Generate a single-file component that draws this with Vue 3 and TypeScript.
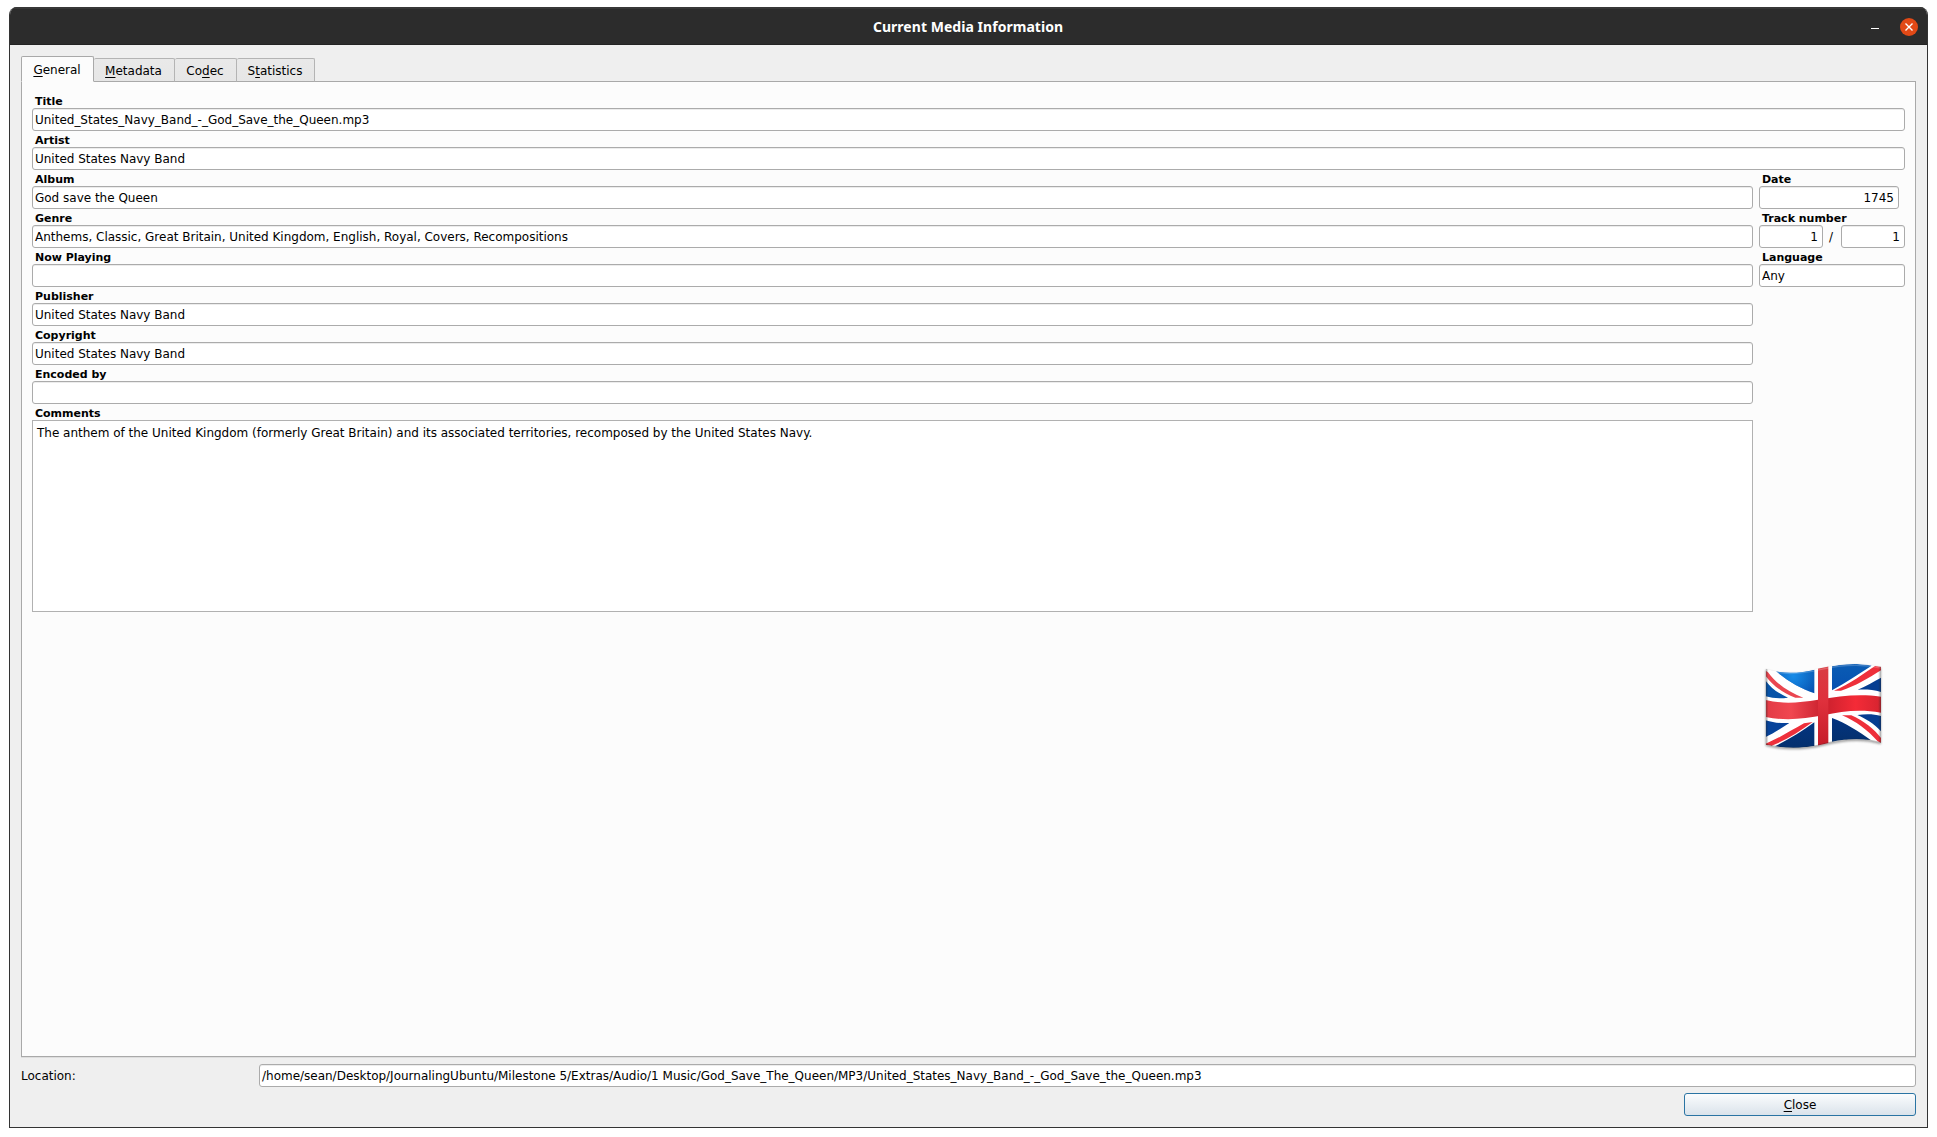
<script setup lang="ts">
interface Tab {
  before: string
  key: string
  after: string
  width: number
}

interface Field {
  label: string
  value: string
}

const tabs: Tab[] = [
  { before: '', key: 'G', after: 'eneral', width: 73 },
  { before: '', key: 'M', after: 'etadata', width: 81 },
  { before: 'Co', key: 'd', after: 'ec', width: 62 },
  { before: 'S', key: 't', after: 'atistics', width: 78 },
]

const wideFields: Field[] = [
  { label: 'Title', value: 'United_States_Navy_Band_-_God_Save_the_Queen.mp3' },
  { label: 'Artist', value: 'United States Navy Band' },
]

const mainFields: Field[] = [
  { label: 'Album', value: 'God save the Queen' },
  { label: 'Genre', value: 'Anthems, Classic, Great Britain, United Kingdom, English, Royal, Covers, Recompositions' },
  { label: 'Now Playing', value: '' },
  { label: 'Publisher', value: 'United States Navy Band' },
  { label: 'Copyright', value: 'United States Navy Band' },
  { label: 'Encoded by', value: '' },
]
</script>

<template>
  <div class="window">
    <header class="titlebar">
      <span class="side"></span>
      <span class="title">Current Media Information</span>
      <span class="side controls">
        <span class="minimize"></span>
        <svg class="close-icon" viewBox="0 0 18 18">
          <circle cx="9" cy="9" r="9" fill="#e24916" />
          <path d="M5.5 5.5L12.5 12.5M12.5 5.5L5.5 12.5" stroke="#fff" stroke-width="1.4" />
        </svg>
      </span>
    </header>

    <main class="body">
      <nav class="tabs">
        <div
          v-for="(tab, i) in tabs"
          :key="tab.after"
          class="tab"
          :class="{ active: i === 0 }"
          :style="{ width: tab.width + 'px' }"
        ><span>{{ tab.before }}<span class="mnemonic">{{ tab.key }}</span>{{ tab.after }}</span></div>
      </nav>

      <section class="panel">
        <div v-for="f in wideFields" :key="f.label" class="field">
          <label>{{ f.label }}</label>
          <div class="input">{{ f.value }}</div>
        </div>
        <div class="columns">
          <div class="left">
            <div v-for="f in mainFields" :key="f.label" class="field">
              <label>{{ f.label }}</label>
              <div class="input">{{ f.value }}</div>
            </div>
            <div class="comments-field">
              <label>Comments</label>
              <div class="comments">The anthem of the United Kingdom (formerly Great Britain) and its associated territories, recomposed by the United States Navy.</div>
            </div>
          </div>
          <div class="right">
            <div class="field">
              <label>Date</label>
              <div class="input number date">1745</div>
            </div>
            <div class="field">
              <label>Track number</label>
              <div class="track">
                <div class="input number">1</div>
                <span class="slash">/</span>
                <div class="input number">1</div>
              </div>
            </div>
            <div class="field">
              <label>Language</label>
              <div class="input">Any</div>
            </div>
            <svg class="art" viewBox="57 6 384 384">
              <defs>
                <linearGradient id="blue" x1="0" y1="0" x2="0" y2="1">
                  <stop offset="0" stop-color="#0a5cb4" />
                  <stop offset="1" stop-color="#0650b0" />
                </linearGradient>
                <linearGradient id="navy" x1="0" y1="0" x2="0" y2="1">
                  <stop offset="0" stop-color="#033480" />
                  <stop offset="1" stop-color="#04306e" />
                </linearGradient>
                <radialGradient id="glow" gradientUnits="userSpaceOnUse" cx="160" cy="108" r="75">
                  <stop offset="0" stop-color="#168be8" />
                  <stop offset="1" stop-color="#168be8" stop-opacity="0" />
                </radialGradient>
                <linearGradient id="red" gradientUnits="userSpaceOnUse" x1="77" y1="0" x2="423" y2="0">
                  <stop offset="0" stop-color="#e23b46" />
                  <stop offset=".22" stop-color="#f04750" />
                  <stop offset=".5" stop-color="#c9202d" />
                  <stop offset=".78" stop-color="#f42b37" />
                  <stop offset="1" stop-color="#d62430" />
                </linearGradient>
                <linearGradient id="post" x1="0" y1="0" x2="0" y2="1">
                  <stop offset="0" stop-color="#d93d43" />
                  <stop offset=".45" stop-color="#df303c" />
                  <stop offset="1" stop-color="#c51c29" />
                </linearGradient>
                <linearGradient id="edge" gradientUnits="userSpaceOnUse" x1="77" y1="0" x2="423" y2="0">
                  <stop offset="0" stop-color="#222" stop-opacity=".45" />
                  <stop offset=".025" stop-color="#222" stop-opacity="0" />
                  <stop offset=".975" stop-color="#222" stop-opacity="0" />
                  <stop offset="1" stop-color="#222" stop-opacity=".4" />
                </linearGradient>
                <clipPath id="cloth">
                  <path d="M77 86C125 102 180 99 240 85C300 71 362 66 423 80V309C365 292 311 298 250 313C189 328 127 327 77 314Z" />
                </clipPath>
                <filter id="soft" x="-10%" y="-10%" width="120%" height="125%">
                  <feGaussianBlur stdDeviation="3" />
                </filter>
              </defs>
              <path d="M77 90C125 106 180 103 240 89C300 75 362 70 423 84V313C365 296 311 302 250 317C189 332 127 331 77 318Z" fill="#555" opacity=".55" filter="url(#soft)" />
              <g clip-path="url(#cloth)">
                <rect x="70" y="60" width="360" height="270" fill="#fff" />
                <path d="M108 94C148 102 187 98 223 89V160C181 145 146 124 108 94Z" fill="url(#blue)" />
                <path d="M77 122C94 145 115 160 144 173C119 176 98 175 77 169Z" fill="#0753a8" />
                <path d="M276 79C312 71 352 70 395 77C353 103 318 128 276 151Z" fill="url(#blue)" />
                <path d="M423 113V156C399 149 379 148 353 149C378 138 401 125 423 113Z" fill="#063d91" />
                <path d="M77 241C101 249 121 250 148 249C121 267 98 281 77 291Z" fill="#07439a" />
                <path d="M223 247V318C183 325 143 325 105 319C149 297 184 275 223 247Z" fill="url(#navy)" />
                <path d="M276 234C318 250 352 272 392 300C352 296 315 297 276 305Z" fill="url(#navy)" />
                <path d="M352 225C379 222 401 222 423 228V274C401 251 380 237 352 225Z" fill="#063d91" />
                <path d="M108 94C148 102 187 98 223 89V160C181 145 146 124 108 94Z" fill="url(#glow)" />
                <path d="M77 92L84 97C111 133 147 157 190 173H166C127 159 97 135 77 108Z" fill="#ea4650" />
                <path d="M282 152C330 132 374 99 405 78L423 80V91C387 113 347 139 303 152Z" fill="#ee303b" />
                <path d="M218 246C178 276 135 302 95 317L77 314V311C116 295 154 271 192 250Z" fill="#ee303b" />
                <path d="M306 226H334C373 243 403 268 423 294V308L413 304C384 271 347 243 306 226Z" fill="#ee303b" />
                <path d="M77 180C132 193 177 188 234 179C302 168 357 160 423 170V218C357 207 308 214 250 226C189 238 132 242 77 231Z" fill="url(#red)" />
                <path d="M234 80L265 75V315L234 320Z" fill="url(#post)" />
                <path d="M77 90C130 106 182 103 240 89C300 75 362 70 423 84" fill="none" stroke="#fff" stroke-opacity=".2" stroke-width="4" />
                <rect x="70" y="60" width="360" height="270" fill="url(#edge)" />
                <path d="M77 314C127 327 189 328 250 313C311 298 365 292 423 309" fill="none" stroke="#222" stroke-opacity=".3" stroke-width="5" />
              </g>
            </svg>
          </div>
        </div>
      </section>

      <div class="location">
        <span class="location-label">Location:</span>
        <div class="input">/home/sean/Desktop/JournalingUbuntu/Milestone 5/Extras/Audio/1 Music/God_Save_The_Queen/MP3/United_States_Navy_Band_-_God_Save_the_Queen.mp3</div>
      </div>
      <footer class="actions">
        <button type="button"><span class="mnemonic">C</span>lose</button>
      </footer>
    </main>
  </div>
</template>

<style>
body {
  background: #fff;
}
</style>

<style scoped>
* {
  box-sizing: border-box;
}
.window {
  width: 1919px;
  height: 1121px;
  margin: 7px 0 0 9px;
  border: 1px solid #333;
  border-top: 0;
  border-radius: 8px 8px 0 0;
  background: #efefef;
  overflow: hidden;
  font: 12px/14px "DejaVu Sans", sans-serif;
  letter-spacing: -0.008px;
  color: #000;
}
.titlebar {
  display: flex;
  align-items: center;
  height: 38px;
  background: #2c2c2c;
  border-top: 2px solid #383838;
  border-bottom: 1px solid #232323;
}
.side {
  flex: 1;
}
.title {
  padding-left: 8px;
  color: #fff;
  font: 700 14px/20px "Noto Sans", sans-serif;
  letter-spacing: 0.04px;
  white-space: nowrap;
}
.controls {
  display: flex;
  justify-content: flex-end;
  align-items: center;
  padding-right: 9px;
}
.minimize {
  width: 8px;
  height: 1px;
  margin: 4px 21px 0 0;
  background: #fff;
}
.close-icon {
  width: 18px;
  height: 18px;
}
.body {
  padding: 11px 11px 0;
}
.tabs {
  display: flex;
  align-items: flex-end;
  height: 26px;
  margin-bottom: -1px;
}
.tab {
  display: flex;
  justify-content: center;
  align-items: center;
  height: 24px;
  padding: 1px 1px 0 0;
  border: 1px solid #b4b4b4;
  border-left-width: 0;
  border-bottom-color: #a9a9a9;
  border-radius: 2px 2px 0 0;
  background: linear-gradient(#e9e9e9, #e6e6e6);
}
.tab.active {
  height: 26px;
  border-color: #a9a9a9;
  border-left-width: 1px;
  border-bottom-color: #fcfcfc;
  background: #fcfcfc;
}
.mnemonic {
  text-decoration: underline;
  text-decoration-thickness: 1px;
  text-underline-offset: 2px;
  text-decoration-skip-ink: none;
}
.panel {
  height: 976px;
  padding: 10px;
  border: 1px solid #a9a9a9;
  background: #fcfcfc;
  box-shadow: 0 1px 0 #dedede;
}
.field {
  height: 39px;
}
label {
  display: block;
  height: 16px;
  padding: 2px 0 0 3px;
  font: 700 11px/16px "DejaVu Sans", sans-serif;
  white-space: nowrap;
}
.input {
  height: 23px;
  padding: 3px 2px;
  border: 1px solid #ababab;
  border-radius: 3px;
  background: #fff;
  box-shadow: inset 0 1px 0 #ececec;
  white-space: nowrap;
  line-height: 16px;
}
.columns {
  display: flex;
  gap: 6px;
}
.left {
  width: 1721px;
}
.right {
  width: 146px;
}
.comments {
  height: 192px;
  padding: 5px 4px;
  border: 1px solid #b1b1b1;
  background: #fff;
}
.number {
  text-align: right;
  padding-right: 4px;
}
.date {
  width: 140px;
}
.track {
  display: flex;
  justify-content: space-between;
}
.track .input {
  width: 64px;
}
.slash {
  padding-right: 2px;
  line-height: 24px;
}
.art {
  display: block;
  width: 128px;
  height: 128px;
  margin-top: 355px;
}
.location {
  display: flex;
  align-items: center;
  margin-top: 7px;
}
.location-label {
  width: 238px;
}
.location .input {
  flex: 1;
}
.actions {
  display: flex;
  justify-content: flex-end;
  margin-top: 6px;
}
button {
  width: 232px;
  height: 23px;
  padding: 0;
  border: 1px solid #2a74a3;
  border-radius: 3px;
  background: linear-gradient(#fbfcfd, #dae3eb);
  color: #000;
  font: 12px/14px "DejaVu Sans", sans-serif;
}
</style>
